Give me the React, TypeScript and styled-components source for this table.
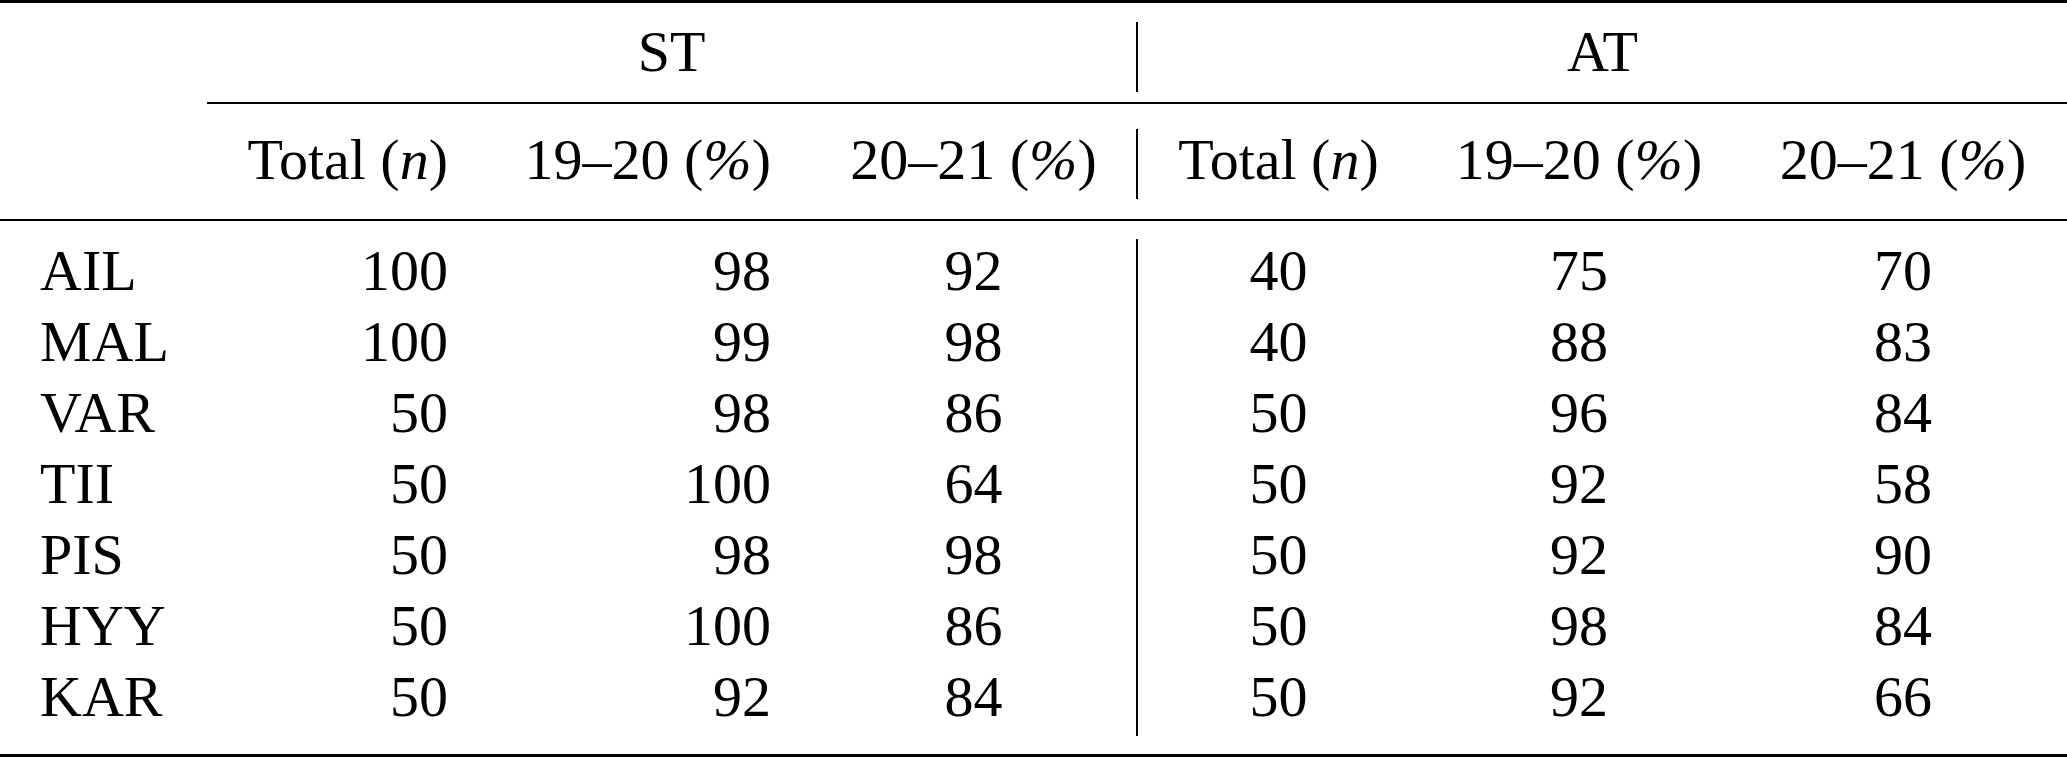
import styled, { createGlobalStyle } from 'styled-components';

const GlobalStyle = createGlobalStyle`
  html, body {
    margin: 0;
    padding: 0;
    background: #fff;
  }
  body {
    font-family: 'Liberation Serif', 'Times New Roman', serif;
    color: #000;
  }
`;

type Align = 'left' | 'right' | 'center';

const rows = [
  { site: 'AIL', st: [100, 98, 92], at: [40, 75, 70] },
  { site: 'MAL', st: [100, 99, 98], at: [40, 88, 83] },
  { site: 'VAR', st: [50, 98, 86], at: [50, 96, 84] },
  { site: 'TII', st: [50, 100, 64], at: [50, 92, 58] },
  { site: 'PIS', st: [50, 98, 98], at: [50, 92, 90] },
  { site: 'HYY', st: [50, 100, 86], at: [50, 98, 84] },
  { site: 'KAR', st: [50, 92, 84], at: [50, 92, 66] },
];

// label, then ST (3 cols), then AT (3 cols)
const COLUMNS = '207px 281px 323px 325px 283px 320px 328px';
const bodyAlign: Align[] = ['left', 'right', 'right', 'center', 'center', 'center', 'center'];

const App = () => {
  return (
    <>
      <GlobalStyle />
      <Table>
        <Rule $thickness={3} />

        <Row $top={19} $height={70} $lineHeight={60}>
          <Cell />
          <Cell $span={3} $align="center">
            ST
          </Cell>
          <Cell $span={3} $align="center" $divider>
            AT
          </Cell>
        </Row>

        <Rule $thickness={2} $top={10} $inset={207} />

        <Row $top={25} $height={70} $lineHeight={62}>
          <Cell />
          <Cell $align="right">
            Total (<i>n</i>)
          </Cell>
          <Cell $align="right">
            19–20 (<i>%</i>)
          </Cell>
          <Cell $align="center">
            20–21 (<i>%</i>)
          </Cell>
          <Cell $align="center" $divider>
            Total (<i>n</i>)
          </Cell>
          <Cell $align="center">
            19–20 (<i>%</i>)
          </Cell>
          <Cell $align="center">
            20–21 (<i>%</i>)
          </Cell>
        </Row>

        <Rule $thickness={2} $top={20} />

        <Body>
          {rows.map((r) => {
            const values: (string | number)[] = [r.site, ...r.st, ...r.at];
            return values.map((v, i) => (
              <Cell
                key={r.site + i}
                $align={bodyAlign[i]}
                $divider={i === 4}
              >
                {v}
              </Cell>
            ));
          })}
        </Body>

        <Rule $thickness={3} $top={18} />
      </Table>
    </>
  );
};

export default App;

const Table = styled.div`
  width: 2067px;
  display: flex;
  flex-direction: column;
  font-size: 58px;
`;

const Rule = styled.div<{ $thickness: number; $top?: number; $inset?: number }>`
  height: ${(p) => p.$thickness}px;
  margin-top: ${(p) => p.$top ?? 0}px;
  margin-left: ${(p) => p.$inset ?? 0}px;
  background: #000;
`;

const Row = styled.div<{ $top: number; $height: number; $lineHeight: number }>`
  display: grid;
  grid-template-columns: ${COLUMNS};
  margin-top: ${(p) => p.$top}px;
  height: ${(p) => p.$height}px;
  line-height: ${(p) => p.$lineHeight}px;
`;

const Body = styled.div`
  display: grid;
  grid-template-columns: ${COLUMNS};
  grid-auto-rows: 71px;
  margin-top: 18px;
  line-height: 63px;
`;

const Cell = styled.div<{ $align?: Align; $span?: number; $divider?: boolean }>`
  grid-column: span ${(p) => p.$span ?? 1};
  text-align: ${(p) => p.$align ?? 'left'};
  white-space: nowrap;
  padding-left: ${(p) => (p.$align === 'left' ? '40px' : '0')};
  padding-right: ${(p) => (p.$align === 'right' ? '40px' : '0')};
  border-left: ${(p) => (p.$divider ? '2px solid #000' : 'none')};

  i {
    font-style: italic;
  }
`;
